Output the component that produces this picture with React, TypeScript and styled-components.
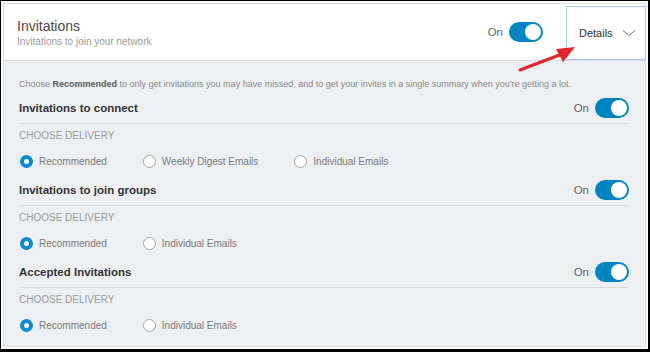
import React from "react";
import styled, { createGlobalStyle } from "styled-components";

const Global = createGlobalStyle`
  html, body { margin: 0; padding: 0; background: #ffffff; }
  body { font-family: "Liberation Sans", Arial, Helvetica, sans-serif; }
  * { box-sizing: border-box; }
`;

const Frame = styled.div`
  position: relative;
  width: 650px;
  height: 352px;
  border-style: solid;
  border-color: #000;
  border-width: 1px 2px 3px 1px;
  padding: 2px 2px 2px 2px;
  background: #fff;
`;

const Card = styled.div`
  height: 100%;
  border: 1px solid #dcdfe2;
  display: flex;
  flex-direction: column;
  background: #edf0f3;
`;

const Header = styled.div`
  height: 57px;
  background: #fff;
  border-bottom: 1px solid #d9dcdf;
  display: flex;
  align-items: center;
  padding-left: 13px;
`;

const TitleBlock = styled.div`
  flex: 1;
  display: flex;
  flex-direction: column;
  margin-top: 1px;
`;

const Title = styled.div`
  font-size: 14px;
  line-height: 18px;
  color: #4a4a4a;
`;

const Subtitle = styled.div`
  font-size: 10px;
  line-height: 13px;
  color: #9a9a9a;
`;

const SwitchGroup = styled.div`
  display: flex;
  align-items: center;
  gap: 6px;
`;

const OnLabel = styled.span`
  font-size: 11.5px;
  color: #666;
`;

const Toggle = styled.span`
  display: flex;
  justify-content: flex-end;
  align-items: center;
  width: 34px;
  height: 20px;
  border-radius: 10px;
  background: #0084bf;
  padding: 2px;
`;

const Knob = styled.span`
  width: 16px;
  height: 16px;
  border-radius: 50%;
  background: #fff;
`;

const DetailsButton = styled.div`
  align-self: flex-start;
  margin-top: 2px;
  margin-left: 23px;
  width: 80px;
  height: 54px;
  margin-right: -1px;
  border: 1px solid #a9c8f2;
  background: #fff;
  display: flex;
  align-items: center;
  padding-left: 12px;
  gap: 9px;
  font-size: 11px;
  color: #333;
`;

const Body = styled.div`
  flex: 1;
  padding: 16px 16px 0 15px;
`;

const Description = styled.div`
  font-size: 9px;
  line-height: 14px;
  color: #8a8a8a;
  white-space: nowrap;
  b {
    font-weight: 600;
    color: #5a5a5a;
  }
`;

const Section = styled.div<{ $first?: boolean }>`
  margin-top: ${(p) => (p.$first ? 2 : 6)}px;
`;

const SectionHead = styled.div`
  height: 31px;
  display: flex;
  align-items: center;
  justify-content: space-between;
  border-bottom: 1px solid #d9dcdf;
`;

const SectionTitle = styled.div`
  font-size: 11.5px;
  font-weight: 700;
  color: #333;
`;

const DeliveryLabel = styled.div`
  margin-top: 6px;
  font-size: 10px;
  line-height: 12px;
  color: #9b9b9b;
  text-transform: uppercase;
`;

const RadioRow = styled.div`
  margin-top: 11px;
  height: 16px;
  display: flex;
  align-items: center;
  gap: 36px;
  padding-left: 1px;
`;

const Option = styled.label`
  display: flex;
  align-items: center;
  gap: 6px;
  font-size: 10px;
  color: #7a7a7a;
`;

const Radio = styled.span<{ $checked?: boolean }>`
  width: 13px;
  height: 13px;
  border-radius: 50%;
  border: ${(p) => (p.$checked ? "4px solid #0a8ad0" : "1px solid #a6a6a6")};
  background: #fff;
`;

const ArrowOverlay = styled.svg`
  position: absolute;
  left: 0;
  top: 0;
  pointer-events: none;
`;

type Sec = { title: string; options: string[] };

const sections: Sec[] = [
  { title: "Invitations to connect", options: ["Recommended", "Weekly Digest Emails", "Individual Emails"] },
  { title: "Invitations to join groups", options: ["Recommended", "Individual Emails"] },
  { title: "Accepted Invitations", options: ["Recommended", "Individual Emails"] },
];

const Switch = () => (
  <SwitchGroup>
    <OnLabel>On</OnLabel>
    <Toggle>
      <Knob />
    </Toggle>
  </SwitchGroup>
);

export default function App() {
  return (
    <>
      <Global />
      <Frame>
        <Card>
          <Header>
            <TitleBlock>
              <Title>Invitations</Title>
              <Subtitle>Invitations to join your network</Subtitle>
            </TitleBlock>
            <Switch />
            <DetailsButton>
              <span>Details</span>
              <svg width="14" height="8" viewBox="0 0 14 8">
                <polyline points="1,1.5 7,6.5 13,1.5" fill="none" stroke="#777" strokeWidth="1" />
              </svg>
            </DetailsButton>
          </Header>
          <Body>
            <Description>
              Choose <b>Recommended</b> to only get invitations you may have missed, and to get your invites in a single
              summary when you're getting a lot.
            </Description>
            {sections.map((s, i) => (
              <Section key={s.title} $first={i === 0}>
                <SectionHead>
                  <SectionTitle>{s.title}</SectionTitle>
                  <Switch />
                </SectionHead>
                <DeliveryLabel>Choose Delivery</DeliveryLabel>
                <RadioRow>
                  {s.options.map((o, j) => (
                    <Option key={o}>
                      <Radio $checked={j === 0} />
                      {o}
                    </Option>
                  ))}
                </RadioRow>
              </Section>
            ))}
          </Body>
        </Card>
        <ArrowOverlay width="650" height="352" viewBox="0 0 650 352">
          <line x1="519" y1="69" x2="561" y2="53" stroke="#e3262b" strokeWidth="3" strokeLinecap="round" />
          <polygon points="574,46 555,48 562,61" fill="#e3262b" />
        </ArrowOverlay>
      </Frame>
    </>
  );
}
